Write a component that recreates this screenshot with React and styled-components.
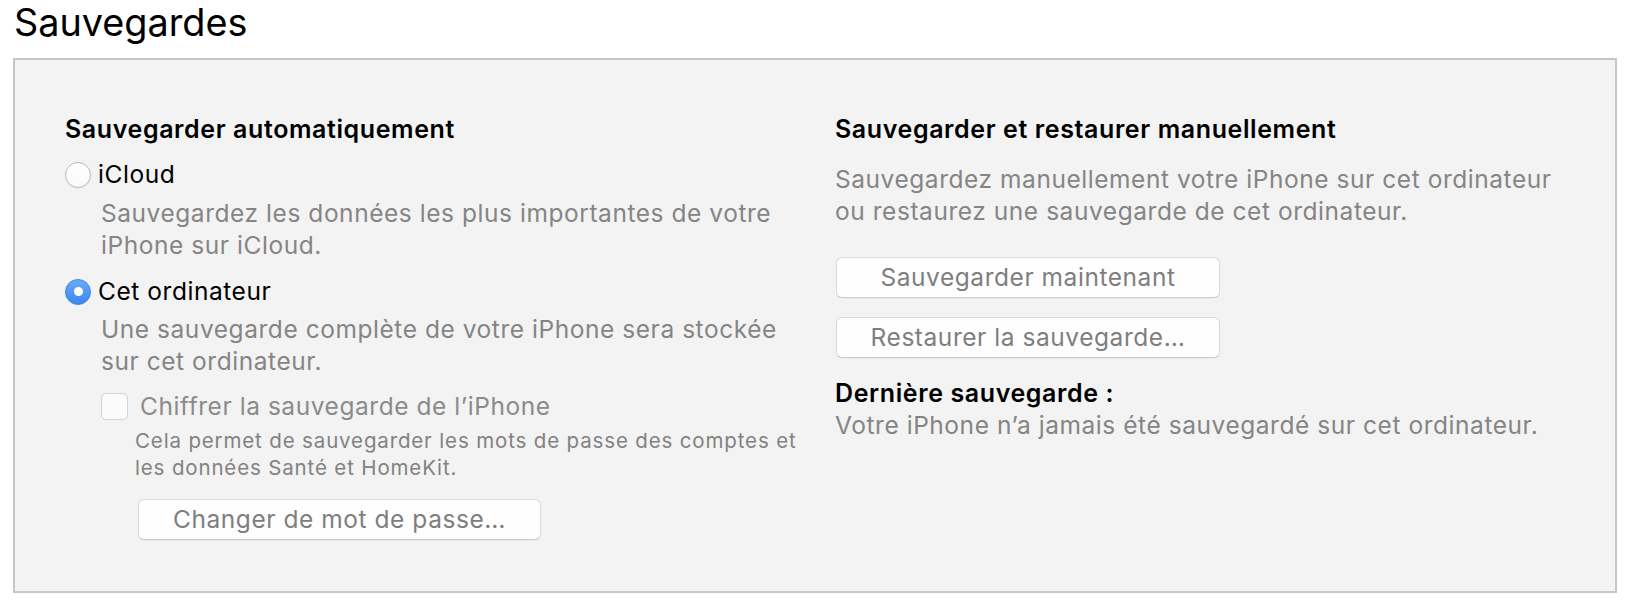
import React from "react";
import styled, { createGlobalStyle } from "styled-components";

const Global = createGlobalStyle`
  html, body { margin: 0; padding: 0; background: #ffffff; }
  body { font-family: Inter, "Noto Sans", "Liberation Sans", sans-serif; -webkit-font-smoothing: antialiased; }
`;

const Page = styled.div`
  width: 1626px;
  height: 606px;
  overflow: hidden;
`;

const Title = styled.h1`
  margin: 0 0 14px 14px;
  font-size: 37.8px;
  line-height: 44px;
  font-weight: 400;
  color: #000;
`;

const Panel = styled.section`
  box-sizing: border-box;
  margin-left: 13px;
  width: 1604px;
  height: 535px;
  border: 2px solid #c6c6c6;
  background: #f3f3f3;
  padding: 52px 0 0 50px;
  display: grid;
  grid-template-columns: 770px 1fr;
`;

const Column = styled.div`
  display: flex;
  flex-direction: column;
  align-items: flex-start;
`;

const Heading = styled.h2`
  margin: ${(p) => p.$mt || 0}px 0 0 0;
  font-size: 25px;
  line-height: 31px;
  letter-spacing: 0.6px;
  font-weight: 600;
  color: #000;
  white-space: nowrap;
`;

const OptionRow = styled.label`
  display: flex;
  align-items: center;
  height: 31px;
  margin-top: ${(p) => p.$mt}px;
  margin-left: ${(p) => p.$indent || 0}px;
  gap: ${(p) => p.$gap || 7}px;
`;

const Radio = styled.span`
  box-sizing: border-box;
  width: 26px;
  height: 26px;
  border-radius: 50%;
  display: flex;
  align-items: center;
  justify-content: center;
  flex: none;
  ${(p) =>
    p.$checked
      ? `
    background: linear-gradient(#69abf7, #3a88ef);
    border: 1px solid #3b82e0;
  `
      : `
    background: linear-gradient(#ffffff, #fafafa);
    border: 1px solid #b9b9b9;
    box-shadow: 0 0.5px 1px rgba(0, 0, 0, 0.08);
  `}
`;

const Dot = styled.span`
  width: 9px;
  height: 9px;
  border-radius: 50%;
  background: #ffffff;
`;

const Checkbox = styled.span`
  box-sizing: border-box;
  width: 27px;
  height: 27px;
  border-radius: 5px;
  border: 1px solid #d3d3d3;
  background: #fbfbfb;
  flex: none;
`;

const Label = styled.span`
  font-size: 24.5px;
  line-height: 31px;
  letter-spacing: 0.55px;
  color: ${(p) => (p.$disabled ? "#8b8b8b" : "#000")};
  white-space: nowrap;
`;

const Desc = styled.p`
  margin: ${(p) => p.$mt || 0}px 0 0 ${(p) => p.$indent || 0}px;
  font-size: 24.5px;
  line-height: 32px;
  letter-spacing: 0.55px;
  color: #858585;
  white-space: nowrap;
`;

const SmallDesc = styled.p`
  margin: ${(p) => p.$mt || 0}px 0 0 ${(p) => p.$indent || 0}px;
  font-size: 20.5px;
  line-height: 27px;
  letter-spacing: 0.85px;
  color: #828282;
  white-space: nowrap;
`;

const Button = styled.button`
  box-sizing: border-box;
  width: ${(p) => p.$w}px;
  height: 41px;
  margin: ${(p) => p.$mt || 0}px 0 0 ${(p) => p.$indent || 0}px;
  padding: 0;
  border: 1px solid #dadada;
  border-bottom-color: #cbcbcb;
  border-radius: 6px;
  background: #fefefe;
  box-shadow: 0 1px 0 rgba(0, 0, 0, 0.03);
  font-family: inherit;
  font-size: 24.5px;
  letter-spacing: 0.55px;
  line-height: 39px;
  color: #7e7e7e;
  text-align: center;
`;

const Strong = styled.div`
  margin-top: ${(p) => p.$mt || 0}px;
  font-size: 25px;
  line-height: 31px;
  letter-spacing: 0.6px;
  font-weight: 600;
  color: #000;
  white-space: nowrap;
`;

export default function App() {
  return (
    <Page>
      <Global />
      <Title>Sauvegardes</Title>
      <Panel>
        <Column>
          <Heading $mt={2}>Sauvegarder automatiquement</Heading>
          <OptionRow $mt={14}>
            <Radio />
            <Label>iCloud</Label>
          </OptionRow>
          <Desc $mt={7} $indent={36}>
            Sauvegardez les données les plus importantes de votre
            <br />
            iPhone sur iCloud.
          </Desc>
          <OptionRow $mt={15}>
            <Radio $checked>
              <Dot />
            </Radio>
            <Label>Cet ordinateur</Label>
          </OptionRow>
          <Desc $mt={6} $indent={36}>
            Une sauvegarde complète de votre iPhone sera stockée
            <br />
            sur cet ordinateur.
          </Desc>
          <OptionRow $mt={14} $indent={36} $gap={12}>
            <Checkbox />
            <Label $disabled>Chiffrer la sauvegarde de l’iPhone</Label>
          </OptionRow>
          <SmallDesc $mt={5} $indent={70}>
            Cela permet de sauvegarder les mots de passe des comptes et
            <br />
            les données Santé et HomeKit.
          </SmallDesc>
          <Button $w={403} $mt={18} $indent={73}>
            Changer de mot de passe…
          </Button>
        </Column>
        <Column>
          <Heading $mt={2}>Sauvegarder et restaurer manuellement</Heading>
          <Desc $mt={18}>
            Sauvegardez manuellement votre iPhone sur cet ordinateur
            <br />
            ou restaurez une sauvegarde de cet ordinateur.
          </Desc>
          <Button $w={384} $mt={30} $indent={1}>
            Sauvegarder maintenant
          </Button>
          <Button $w={384} $mt={19} $indent={1}>
            Restaurer la sauvegarde…
          </Button>
          <Strong $mt={20}>Dernière sauvegarde&nbsp;:</Strong>
          <Desc>Votre iPhone n’a jamais été sauvegardé sur cet ordinateur.</Desc>
        </Column>
      </Panel>
    </Page>
  );
}
